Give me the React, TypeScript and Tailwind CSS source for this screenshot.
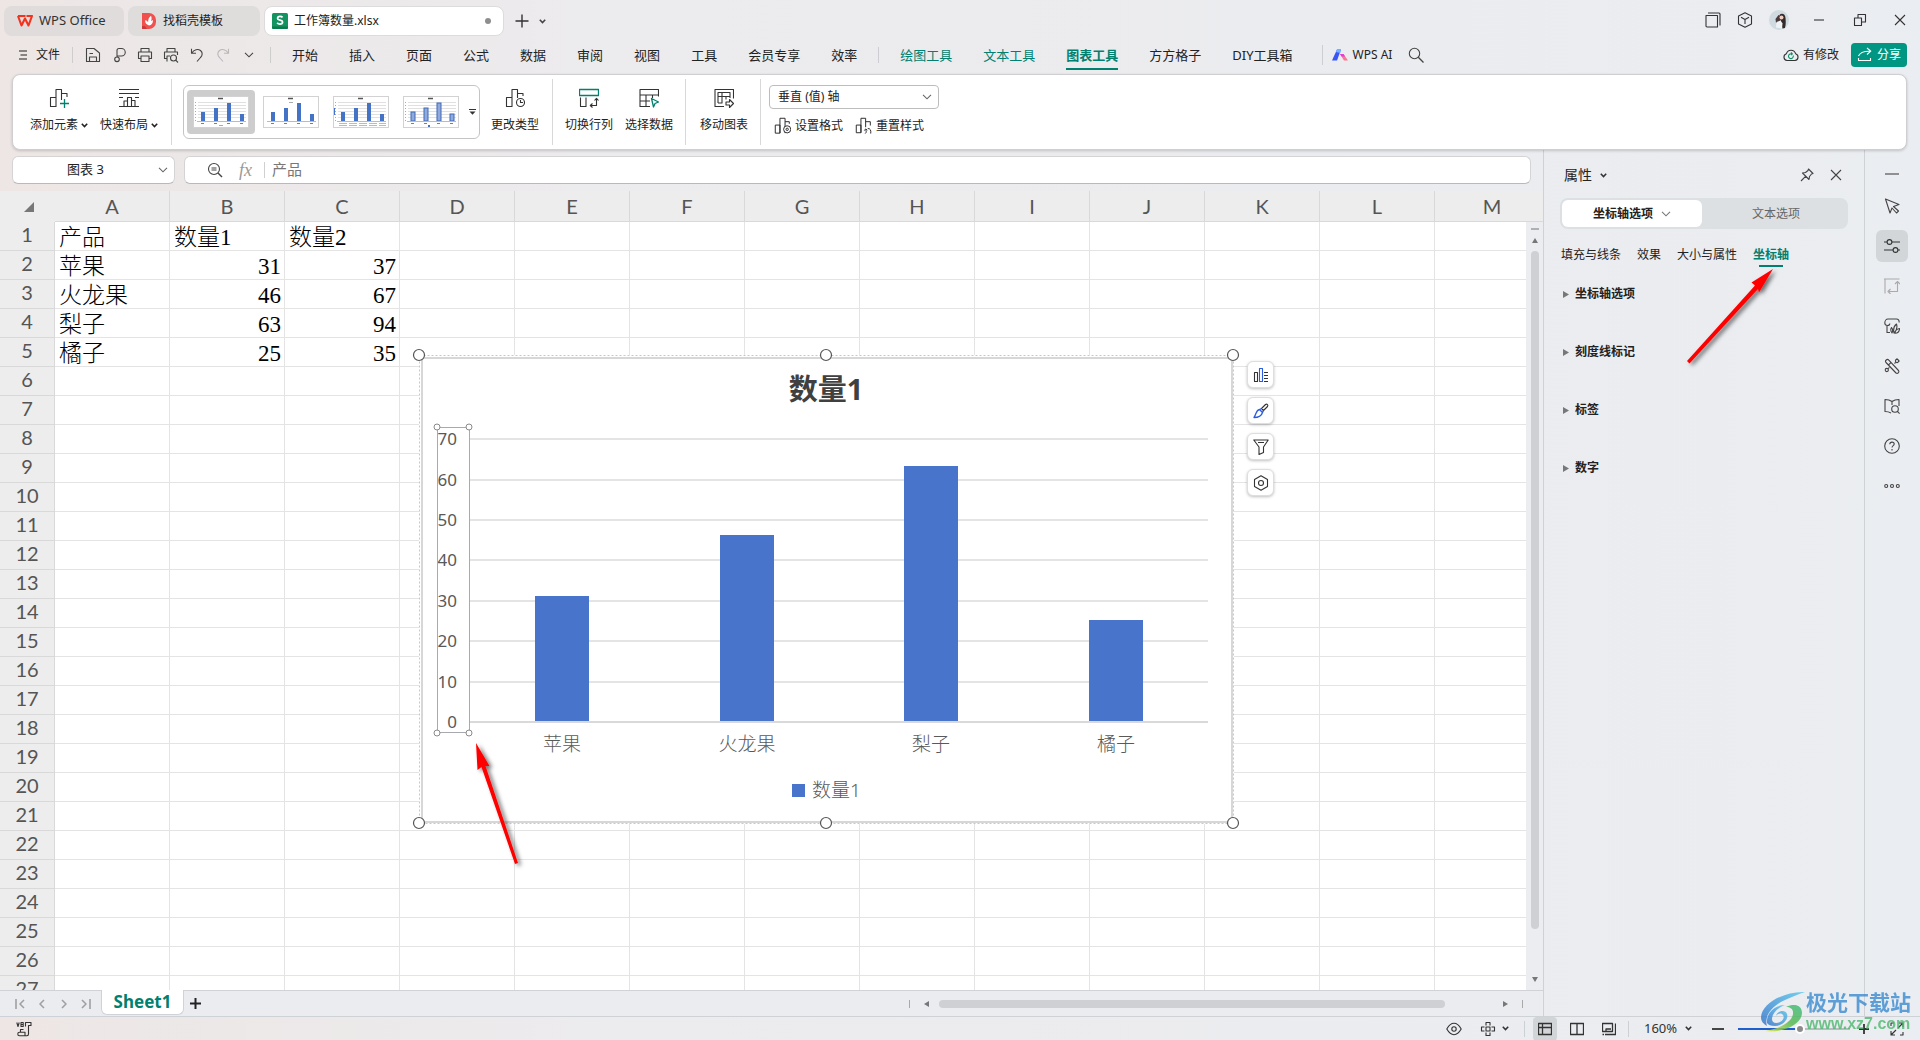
import React from "react";

type Kids = { children: React.ReactNode };
type IconProps = Kids & { size?: number; box?: number; className?: string };

function Icon({ children, size = 16, box = 16, className = "" }: IconProps) {
  return (
    <svg
      width={size}
      height={size}
      viewBox={`0 0 ${box} ${box}`}
      fill="none"
      stroke="currentColor"
      strokeWidth="1.1"
      strokeLinejoin="round"
      className={`shrink-0 ${className}`}
      aria-hidden="true"
    >
      {children}
    </svg>
  );
}

function Chevron({ className = "" }: { className?: string }) {
  return (
    <svg width="10" height="6" viewBox="0 0 10 6" fill="none" stroke="currentColor" strokeWidth="1.1" className={`shrink-0 ${className}`} aria-hidden="true">
      <path d="M1 .8 5 4.8 9 .8" />
    </svg>
  );
}

function SmallChevron({ className = "" }: { className?: string }) {
  return (
    <svg width="7" height="5" viewBox="0 0 7 5" fill="none" stroke="currentColor" strokeWidth="1.6" className={`shrink-0 ${className}`} aria-hidden="true">
      <path d="M.8 .8 3.5 3.5 6.2 .8" />
    </svg>
  );
}

const GREEN = "#00806f";

/* ---------- Title bar ---------- */

function TitleBar() {
  return (
    <div className="flex h-9 items-start gap-1 pl-1 pt-1.5">
      <button className="flex h-[30px] w-[120px] items-center gap-1.5 rounded-lg bg-[#e0dcdc] pl-[13px] text-[13px] text-[#333]">
        <svg width="16" height="12" viewBox="0 0 16 12" aria-hidden="true">
          <path d="M1 1h7.5M1 1l3.5 9.5L8 3.5l3.5 7L15 1H9.5" fill="none" stroke="#f0341f" strokeWidth="2.1" strokeLinejoin="round" />
        </svg>
        WPS Office
      </button>
      <button className="flex h-[30px] w-[132px] items-center gap-[7px] rounded-lg bg-[#dfdcdc] pl-3.5 text-xs text-[#222]">
        <svg width="14" height="16" viewBox="0 0 14 16" aria-hidden="true">
          <path d="M0 0h7a7 7 0 0 1 7 7v2a7 7 0 0 1-7 7H0z" fill="#f0514f" />
          <path d="M0 13h3l2 3H0z" fill="#c93a3a" />
          <path d="M7 12.500C4 11.500 3 9.500 3.200 7.200 4.800 7.600 5.600 8.300 6.200 9.300 5.900 6.500 7 4.500 9 2.800 9.900 5 9.700 6.800 8.900 8.300 9.500 7.600 10.200 7.300 11 7.200 11 10 9.700 12 7 12.500z" fill="#fff" />
        </svg>
        找稻壳模板
      </button>
      <div className="flex h-[30px] w-[240px] items-center rounded-lg border border-[#dcdcdc] bg-white pl-[7px] pr-3 text-xs text-[#222]">
        <svg width="16" height="16" viewBox="0 0 16 16" className="mr-1.5" aria-hidden="true">
          <rect width="16" height="16" rx="1.500" fill="#12935f" />
          <path d="M0 13.500h16V14.500a1.500 1.500 0 0 1-1.500 1.500H1.500A1.500 1.500 0 0 1 0 14.500z" fill="#0b7a4c" />
          <path d="M10.600 4.400C9.900 3.600 9 3.300 8 3.300 6.500 3.300 5.600 4 5.600 5.200c0 2.700 5 1.300 5 3.900 0 1.300-1 2-2.600 2-1.200 0-2.200-.4-2.900-1.200" fill="none" stroke="#fff" strokeWidth="1.700" />
        </svg>
        工作簿数量.xlsx
        <span className="ml-auto size-1.5 rounded-full bg-[#8e8e8e]" />
      </div>
      <button aria-label="新建" className="flex h-[30px] w-7 items-center justify-center text-[#333]">
        <Icon size={14} box={14}><path d="M7 .5v13M.5 7h13" strokeWidth="1.400" /></Icon>
      </button>
      <button aria-label="标签列表" className="-ml-1.5 flex h-[30px] w-4 items-center justify-center text-[#444]"><SmallChevron /></button>

      <div className="ml-auto flex h-7 items-center pr-[14px] text-[#333]">
        <button aria-label="窗口" className="mr-4"><Icon><path d="M1 3.500h11.500V15H2A1 1 0 0 1 1 14zM3 1h11a1 1 0 0 1 1 1v11.500" /></Icon></button>
        <button aria-label="应用" className="mr-4"><Icon><path d="M8 .8 14.500 4v8L8 15.200 1.500 12V4zM4 5.300 8 7.500l4-2.200M8 7.500v4.500" /></Icon></button>
        <button aria-label="账户" className="mr-6">
          <svg width="20" height="20" viewBox="0 0 20 20" aria-hidden="true">
            <circle cx="10" cy="10" r="10" fill="#cfdbe0" />
            <path d="M10.500 5c2-2.500 6-1 6 3 .3 3 .5 6-.5 10l-2.500.500-1.500-7z" fill="#332a2c" />
            <path d="M6.500 9l3-4 2 1 .5 4-3 2.500-2 .5z" fill="#4a3a3c" />
            <circle cx="12.500" cy="7.500" r="2" fill="#f0cdbf" />
            <path d="M7.500 12l4-1.500 2 3-.5 5-6-1z" fill="#eef4f6" />
          </svg>
        </button>
        <button aria-label="最小化" className="mr-7"><Icon size={12} box={12}><path d="M1 6h10" /></Icon></button>
        <button aria-label="还原" className="mr-[27px]"><Icon size={14} box={14}><path d="M1.500 5h7v7.500h-7zM5 5V1.500h7.500V9h-4" /></Icon></button>
        <button aria-label="关闭"><Icon size={12} box={12}><path d="M1 1l10 10M11 1 1 11" /></Icon></button>
      </div>
    </div>
  );
}

/* ---------- Menu bar ---------- */

const MAIN_TABS = ["开始", "插入", "页面", "公式", "数据", "审阅", "视图", "工具", "会员专享", "效率"];

function MenuBar() {
  return (
    <div className="flex h-[38px] items-center pl-[18px] pr-[13px] text-[13px] text-[#222]">
      <button className="flex items-center gap-2 text-xs">
        <Icon size={10} box={10}><path d="M1 1h8M2.500 5H9M1 9h8" /></Icon>
        文件
      </button>
      <span className="ml-3 h-4 w-px bg-[#cfcccc]" />
      <div className="ml-3 flex items-center gap-2.5 text-[#444]">
        <button aria-label="保存"><Icon><path d="M1.500 14.500v-13H9L14.500 6v8.500zM4.500 14v-4h7v4M4.500 6.500H8" /></Icon></button>
        <button aria-label="输出"><Icon><path d="M6 10V3a2 2 0 0 1 2-1.500h2.500a3.700 3.700 0 0 1 0 7.500H6M6 10a2.300 2.300 0 1 1-2.300 2.300c0-1.400 1-2.300 2.300-2.300z" /></Icon></button>
        <button aria-label="打印"><Icon><path d="M4 5V1.500h8V5M4 11.500H1.500v-6.500h13v6.500H12M4 9h8v5.500H4z" /></Icon></button>
        <button aria-label="打印预览"><Icon><path d="M4 5V1.500h8V5M4 11.500H1.500V5h13v3M4 14.500V9h3" /><circle cx="10.500" cy="11" r="3" /><path d="M12.700 13.200 15 15.500" /></Icon></button>
        <button aria-label="撤销"><Icon><path d="M2.500 1.800v4.500H7M2.800 6C5 2.500 9 1.500 11.500 3.500c2.500 2 2 5 0 7L8 14.500" /></Icon></button>
        <button aria-label="恢复" className="text-[#b9b7b7]"><Icon><path d="M13.500 1.800v4.500H9M13.200 6C11 2.500 7 1.500 4.500 3.500c-2.500 2-2 5 0 7L8 14.500" /></Icon></button>
        <button aria-label="更多" className="ml-[3px]"><Chevron /></button>
      </div>
      <span className="ml-4 h-4 w-px bg-[#cfcccc]" />
      <nav className="ml-[21px] flex items-center gap-[31px] whitespace-nowrap pt-0.5">
        {MAIN_TABS.map((t) => <button key={t}>{t}</button>)}
      </nav>
      <span className="ml-[21px] h-4 w-px bg-[#cdcdd2]" />
      <nav className="ml-[21px] flex items-center gap-[31px] whitespace-nowrap pt-0.5">
        <button className="text-[#00806f]">绘图工具</button>
        <button className="text-[#00806f]">文本工具</button>
        <button className="relative font-bold text-[#00806f]">
          图表工具
          <span className="absolute inset-x-0 -bottom-1 h-0.5 bg-[#00806f]" />
        </button>
        <button>方方格子</button>
        <button>DIY工具箱</button>
      </nav>
      <span className="ml-[29px] h-5 w-px bg-[#cdcdd2]" />
      <button className="ml-[9px] flex items-center gap-[5px] whitespace-nowrap text-xs">
        <svg width="16" height="12" viewBox="0 0 16 12" aria-hidden="true">
          <path d="M0 11.500 5 .5h4L5 11.500z" fill="#3a55f5" />
          <path d="M5 .5h4L8.300 4 4 3z" fill="#6fb4ff" />
          <path d="M8 5h3.500L16 11.500h-4z" fill="#f7788f" />
          <path d="M8 5h3.500L13 7.500H9.500z" fill="#e43be0" />
        </svg>
        WPS AI
      </button>
      <button aria-label="搜索" className="ml-4 text-[#444]"><Icon><circle cx="6.500" cy="6.500" r="5.200" /><path d="M10.300 10.300 15.500 15.500" strokeWidth="1.300" /></Icon></button>
      <button className="ml-auto flex items-center gap-1 whitespace-nowrap text-xs">
        <Icon><path d="M4 13.500a3.500 3.500 0 0 1-.6-6.800A4.800 4.800 0 0 1 12.600 6.700 3.500 3.500 0 0 1 12 13.500z" stroke="#333" /><path d="M10.200 8.500A2.400 2.400 0 1 1 8.600 6.900M8 5.400l1.400 1.400L8 8.200" stroke="#0a9068" /></Icon>
        有修改
      </button>
      <button className="ml-3 flex h-6 w-14 items-center justify-center gap-1 rounded bg-[#009682] text-xs text-white">
        <Icon><path d="M1.500 11v2.500h12V11M1.500 9C3 5.500 6 4 13 4.200M10 1l3.800 3.200L10 7.500" /></Icon>
        分享
      </button>
    </div>
  );
}

/* ---------- Ribbon ---------- */

function RibbonButton({ label, icon, arrow }: { label: string; icon: React.ReactNode; arrow?: boolean }) {
  return (
    <button className="flex flex-col items-center gap-[9px] text-xs text-[#222]">
      <span className="flex h-5 items-center text-[#333]">{icon}</span>
      <span className="flex items-center gap-[3px] whitespace-nowrap leading-4">
        {label}
        {arrow && <SmallChevron />}
      </span>
    </button>
  );
}

const Divider = () => <span className="my-1 w-px self-stretch bg-[#d8d8d8]" />;

function Thumb({ kind }: { kind: number }) {
  const bars = [
    [8, 9],
    [21, 13],
    [34, 18],
    [47, 7],
  ];
  return (
    <svg width="56" height="32" viewBox="0 0 56 32" className="bg-white" aria-hidden="true">
      <rect x=".5" y=".5" width="55" height="31" fill="none" stroke="#d2d2d2" />
      <path d="M25 2.500h5" stroke="#555" strokeWidth="1.500" />
      {kind !== 1 && <path d="M5 6.500h48M5 9.500h48M5 12.500h48M5 15.500h48M5 18.500h48M5 21.500h48" stroke="#e0e0e0" />}
      {kind !== 1 && <path d="M2.500 6v20" stroke="#aaa" strokeDasharray="1 2" />}
      {kind === 1 && <path d="M26 6.500h4" stroke="#aaa" />}
      {bars.map(([x, h]) => (
        <rect key={x} x={x} y={25 - h} width="4" height={h} fill={kind === 3 ? "#8faadc" : "#4472c4"} stroke={kind === 3 ? "#3f69b8" : "none"} />
      ))}
      <path d="M4 25.500h49" stroke="#bbb" />
      {kind === 2 ? <path d="M6 27.500h47M6 29.500h47" stroke="#bbb" strokeDasharray="8 2" /> : <path d="M8 27.500h3M21 27.500h3M34 27.500h3M47 27.500h3" stroke="#8a8060" />}
      {kind === 2 && <path d="M1.500 12v7" stroke="#4472c4" />}
      {kind === 0 && <path d="M26 29.500h4" stroke="#aaa" />}
      {kind === 3 && <path d="M25 30h2" stroke="#4472c4" strokeWidth="2" />}
    </svg>
  );
}

const barsPath = "M1.500 9.500H7V19H1.500zM7 19V1.500h6V19";

function Ribbon() {
  return (
    <section className="z-10 ml-3 mr-[13px] flex h-[76px] shrink-0 rounded-lg border border-[#cfcfd2] bg-white shadow-[0_1px_3px_rgba(0,0,0,0.18)]">
      <div className="flex gap-3 pl-[17px] pr-[13px] pt-[13px]">
        <RibbonButton arrow label="添加元素" icon={<Icon size={20} box={20}><path d="M1.500 9.500H7V18.500H1.500zM7 18.500V1.500h5.500V12M12.500 5.500H18V9" /><path d="M15.500 11v9M11 15.500h9" stroke={GREEN} strokeWidth="1.300" /></Icon>} />
        <RibbonButton arrow label="快速布局" icon={<Icon size={20} box={20}><path d="M0 1.500h20M0 5.500h20M0 9.500h4M16 9.500h4M0 18.500h20M5 18V13h3.500M8.500 18V9.500h4V18M12.500 12.500H16V18" /></Icon>} />
      </div>
      <Divider />
      <div className="my-2.5 ml-[11px] flex items-center rounded-md border border-[#c4c4c4] pl-[3px]">
        {[0, 1, 2, 3].map((k) => (
          <button key={k} aria-label={`图表样式 ${k + 1}`} className={k === 0 ? "rounded bg-[#cdcdcd] px-1.5 py-1.5" : "ml-0.5 px-1.5 py-1.5"}>
            <Thumb kind={k} />
          </button>
        ))}
        <button aria-label="更多样式" className="ml-1 w-2.5">
          <svg width="7" height="6" viewBox="0 0 7 6" aria-hidden="true"><path d="M0 .5h7" stroke="#333" /><path d="M.5 2.500h6L3.500 5.800z" fill="#333" /></svg>
        </button>
      </div>
      <div className="flex pl-[11px] pr-[13px] pt-[13px]">
        <RibbonButton label="更改类型" icon={<Icon size={20} box={20}><path d="M1.500 9.500H7V18.500H1.500zM7 18.500V1.500h5.500V10M12.500 5.500H18V8" /><circle cx="15.500" cy="14.500" r="4" /><path d="M15.500 12v2.500H18" /></Icon>} />
      </div>
      <Divider />
      <div className="flex gap-3 px-3 pt-[13px]">
        <RibbonButton label="切换行列" icon={<Icon size={20} box={20}><path d="M.5 1.500h19v6H.5z" stroke={GREEN} strokeWidth="1.300" /><path d="M1.500 9.500v9H7v-9M11.500 17.500h6V11M13.500 15.500l-2.200 2 2.200 2M15.500 12.500l2-2.200 2 2.200" /></Icon>} />
        <RibbonButton label="选择数据" icon={<Icon size={20} box={20}><path d="M11 18.500H1v-17h18.500v7M1 7h18.500M1 13h10M7 7v11.500M13.500 7v3" /><path d="M12.500 10.500l7 3.500-3.500 1.500-1.500 3.500z" stroke={GREEN} strokeWidth="1.300" /></Icon>} />
      </div>
      <Divider />
      <div className="flex pl-3.5 pr-3 pt-[13px]">
        <RibbonButton label="移动图表" icon={<Icon size={20} box={20}><path d="M10 18.500H1v-17h18.500v9M4 15V4.500h12V10M4 8.500h12M8 4.500V15H4M12 8.500v3" /><path d="M12 14h3.500v-2.500L19.500 15.500l-4 4V17H12z" /></Icon>} />
      </div>
      <Divider />
      <div className="ml-2 flex flex-col gap-2 pt-2.5">
        <label className="relative flex items-center">
          <select aria-label="图表元素" defaultValue="v" className="h-6 w-[170px] appearance-none rounded border border-[#bdbdbd] bg-white pl-2 text-xs text-[#222]">
            <option value="v">垂直 (值) 轴</option>
          </select>
          <Chevron className="pointer-events-none absolute right-[7px] text-[#666]" />
        </label>
        <div className="flex items-center gap-3 pl-[5px] text-xs text-[#222]">
          <button className="flex items-center gap-1 whitespace-nowrap">
            <Icon size={17} box={20}><path d={barsPath} /><path d="M13 5.500h5V8" /><circle cx="15.500" cy="14.500" r="4.200" fill="#fff" /><circle cx="15.500" cy="14.500" r="1.400" /></Icon>
            设置格式
          </button>
          <button className="flex items-center gap-1 whitespace-nowrap">
            <Icon size={17} box={20}><path d="M1.500 9.500H7V18.500H1.500zM7 18.500V1.500h5.500V12M12.500 5.500H18V10" /><path d="M12 19.500c1.500-1 1.500-3 .5-4.500M11 16l1.500-2 2 1.500M15 13.500c3 0 4 2 3.500 6" /></Icon>
            重置样式
          </button>
        </div>
      </div>
    </section>
  );
}

/* ---------- Worksheet ---------- */

const COLS = "ABCDEFGHIJKLM".split("");
const DATA: string[][] = [
  ["产品", "数量1", "数量2"],
  ["苹果", "31", "37"],
  ["火龙果", "46", "67"],
  ["梨子", "63", "94"],
  ["橘子", "25", "35"],
];

function FormulaRow() {
  return (
    <div className="flex h-7 shrink-0 gap-[9px] pl-3 pr-3 text-[13px]">
      <div className="flex w-[163px] items-center rounded-md border border-[#d4d4d4] border-b-[#b9b9b9] bg-white pr-1.5 text-[#222]">
        <input aria-label="名称框" defaultValue="图表 3" className="min-w-0 flex-1 bg-transparent text-center outline-none" />
        <Chevron className="text-[#666]" />
      </div>
      <div className="flex flex-1 items-center rounded-md border border-[#d4d4d4] border-b-[#b9b9b9] bg-white pl-[22px]">
        <Icon className="text-[#444]"><circle cx="7" cy="7" r="5.500" /><path d="M11 11l4 4" strokeWidth="1.500" /><path d="M4.500 6h5M4.500 8h5" /></Icon>
        <span className="ml-4 font-[Liberation_Serif] text-lg italic leading-6 text-[#999]">fx</span>
        <span className="ml-3 h-4 w-px bg-[#d0d0d0]" />
        <input aria-label="编辑栏" defaultValue="产品" className="ml-[7px] min-w-0 flex-1 bg-transparent pb-0.5 text-[15px] leading-5 text-[#777] outline-none" />
      </div>
    </div>
  );
}

function Grid() {
  return (
    <table className="w-[1550px] table-fixed border-separate border-spacing-0">
      <colgroup>
        <col className="w-[55px]" />
        {COLS.map((c) => <col key={c} className="w-[115px]" />)}
      </colgroup>
      <thead>
        <tr className="h-[31px] bg-[#ededed] font-[Lato] text-xl leading-[30px] text-[#555]">
          <th className="border-r border-[#ededed] pr-5">
            <svg width="10" height="10" viewBox="0 0 10 10" className="ml-auto" aria-hidden="true"><path d="M10 0v10H0z" fill="#777" /></svg>
          </th>
          {COLS.map((c) => (
            <th key={c} scope="col" className="border-b border-r border-[#d9d9d9] p-0 font-normal">{c}</th>
          ))}
        </tr>
      </thead>
      <tbody>
        {Array.from({ length: 27 }, (_, r) => (
          <tr key={r} className="h-[29px]">
            <th scope="row" className="border-b border-r border-[#d9d9d9] bg-[#ededed] p-0 align-top font-[Lato] text-xl font-normal leading-6 text-[#555]">{r + 1}</th>
            {COLS.map((c, i) => {
              const v = DATA[r]?.[i] ?? "";
              return (
                <td
                  key={c}
                  className={
                    r > 0 && i > 0
                      ? "h-[29px] border-b border-r border-[#e4e4e4] bg-white px-[3px] pb-0 pt-1 text-right font-['Liberation_Serif','Noto_Sans_CJK_SC',serif] text-[23px] font-light leading-6 text-black"
                      : "h-[29px] border-b border-r border-[#e4e4e4] bg-white pb-0 pl-1 pr-0.5 pt-1 font-['Liberation_Serif','Noto_Sans_CJK_SC',serif] text-[23px] font-light leading-6 text-black"
                  }
                >
                  {v}
                </td>
              );
            })}
          </tr>
        ))}
      </tbody>
    </table>
  );
}

const BARS = [
  { name: "苹果", value: 31 },
  { name: "火龙果", value: 46 },
  { name: "梨子", value: 63 },
  { name: "橘子", value: 25 },
];

function ChartObject() {
  const handles = [9, 416, 823].flatMap((x) => [9, 477].map((y) => [x, y]));
  return (
    <svg width="832" height="530" viewBox="0 0 832 530" className="absolute left-[410px] top-[155px]" role="img" aria-label="数量1">
      <defs>
        <filter id="arrowShadow" x="-30%" y="-30%" width="160%" height="160%">
          <feDropShadow dx="3" dy="2" stdDeviation="2" floodOpacity="0.55" />
        </filter>
      </defs>
      <rect x="9" y="9" width="815" height="469" fill="#fff" />
      <rect x="9.500" y="9.500" width="814" height="468" fill="none" stroke="#c8c8c8" strokeDasharray="2 2" />
      <rect x="12" y="12" width="810" height="464" fill="#fff" stroke="#d7d7d7" strokeWidth="2" />
      <text x="416" y="54" textAnchor="middle" fontSize="29" fontWeight="700" fill="#404040" fontFamily="'Noto Sans','Noto Sans CJK SC',sans-serif">数量1</text>
      {[0, 10, 20, 30, 40, 50, 60, 70].map((v) => {
        const y = Math.round(376 - v * 4.04);
        return (
          <g key={v}>
            <path d={`M60 ${y}H798`} stroke={v === 0 ? "#d9d9d9" : "#e4e4e4"} strokeWidth="2" />
            <text x="47" y={y + 6} textAnchor="end" fontSize="17" fill="#595959" fontFamily="'Noto Sans',sans-serif">{v}</text>
          </g>
        );
      })}
      {BARS.map((b, i) => {
        const h = Math.round(b.value * 4.04);
        const cx = 152 + Math.round(i * 184.600);
        return (
          <g key={b.name}>
            <rect x={cx - 27} y={375 - h} width="54" height={h} fill="#4874cb" />
            <text x={cx} y="405" textAnchor="middle" fontSize="19" fontWeight="300" fill="#595959" fontFamily="'Noto Sans CJK SC',sans-serif">{b.name}</text>
          </g>
        );
      })}
      <rect x="382" y="438" width="13" height="13" fill="#4874cb" />
      <text x="402" y="451" fontSize="19" fontWeight="300" fill="#595959" fontFamily="'Noto Sans','Noto Sans CJK SC',sans-serif">数量1</text>
      <rect x="27.500" y="81.500" width="32" height="305" fill="none" stroke="#a9a9b0" />
      {[[27, 81], [59, 81], [27, 387], [59, 387]].map(([x, y]) => <circle key={`${x}-${y}`} cx={x} cy={y} r="3" fill="#fff" stroke="#8a8a8a" />)}
      {handles.map(([x, y]) => <circle key={`${x}-${y}`} cx={x} cy={y} r="5.500" fill="#fff" stroke="#555" strokeWidth="1.200" />)}
      <path d="M66 397 79.500 420 75.500 420 108 517 105 518 71.500 421 67.500 424z" fill="#fe0000" filter="url(#arrowShadow)" />
    </svg>
  );
}

function ChartTools() {
  const cls = "flex size-[27px] items-center justify-center rounded-md border border-[#dedede] bg-white text-[#333] shadow-[0_1px_3px_rgba(0,0,0,0.25)]";
  return (
    <div className="absolute left-[1247px] top-[170px] flex flex-col gap-[9px]">
      <button aria-label="图表元素" className={cls}><Icon><path d="M1.500 5.500h3v9h-3z" /><path d="M6.500 1.500h3v13h-3z" stroke="#2a5be0" /><path d="M11 5.500h4M11 8.500h4M11 11.500h4M11 14.500h4" /></Icon></button>
      <button aria-label="图表样式" className={cls}><Icon><path d="M8.500 5.500 12.500 1.500c1.500-1 3 .5 2 2L10.500 7.500z" /><path d="M8.500 5.500l-2 1 3 3 1-2M6.500 6.500C3 7 3.500 11 1 14.500 5 14.500 8.500 13 9.500 9.500" stroke="#2a5be0" strokeWidth="1.300" /></Icon></button>
      <button aria-label="筛选" className={cls}><Icon><path d="M.8 1h14.400L10.500 8v5.500L6 15.500V8zM5 3.500h6" /></Icon></button>
      <button aria-label="设置" className={cls}><Icon><path d="M8 .8 14.500 4.500v7L8 15.200 1.500 11.500v-7z" /><circle cx="8" cy="8" r="2.500" /></Icon></button>
    </div>
  );
}

function VerticalScroll() {
  return (
    <div className="mt-[30px] flex w-[17px] shrink-0 flex-col items-center border-t border-[#d9d9d9] bg-[#ecedf1] pb-2 pl-px pt-1.5">
      <span className="h-0.5 w-2 bg-[#b0b0b2]" />
      <svg width="6" height="5" viewBox="0 0 6 5" className="mt-2" aria-hidden="true"><path d="M3 0 6 5H0z" fill="#777" /></svg>
      <span className="mb-12 mt-2 w-2 flex-1 rounded bg-[#cfd0d4]" />
      <svg width="6" height="5" viewBox="0 0 6 5" aria-hidden="true"><path d="M3 5 6 0H0z" fill="#777" /></svg>
    </div>
  );
}

function SheetBar() {
  return (
    <div className="flex h-[26px] shrink-0 items-center border-t border-[#d0d2d6] bg-[#ebecf0] pr-5">
      <div className="flex w-[101px] items-center gap-3 pl-[15px] text-[#a0a0a2]">
        <button aria-label="第一张"><Icon size={10} box={10}><path d="M1 0v10M9 1 5 5l4 4" strokeWidth="1.600" /></Icon></button>
        <button aria-label="上一张"><Icon size={10} box={10}><path d="M7 1 3 5l4 4" strokeWidth="1.600" /></Icon></button>
        <button aria-label="下一张"><Icon size={10} box={10}><path d="M3 1l4 4-4 4" strokeWidth="1.600" /></Icon></button>
        <button aria-label="最后一张"><Icon size={10} box={10}><path d="M9 0v10M1 1l4 4-4 4" strokeWidth="1.600" /></Icon></button>
      </div>
      <button className="-mt-px h-[25px] w-[83px] self-start rounded-b-md border border-t-0 border-[#d0d2d6] bg-white font-['Noto_Sans'] text-[17px] font-bold leading-6 text-[#00806f]">Sheet1</button>
      <button aria-label="新建工作表" className="ml-1.5 text-[#222]"><Icon size={11} box={11}><path d="M5.500 0v11M0 5.500h11" strokeWidth="2" /></Icon></button>
      <div className="ml-auto flex w-[614px] items-center">
        <span className="h-2 w-px bg-[#aaa]" />
        <svg width="5" height="6" viewBox="0 0 5 6" className="ml-3.5" aria-hidden="true"><path d="M0 3 5 0v6z" fill="#777" /></svg>
        <span className="ml-2.5 mr-[58px] h-2 flex-1 rounded bg-[#cfd0d3]" />
        <svg width="5" height="6" viewBox="0 0 5 6" aria-hidden="true"><path d="M5 3 0 0v6z" fill="#777" /></svg>
        <span className="ml-3.5 h-2 w-px bg-[#aaa]" />
      </div>
    </div>
  );
}

/* ---------- Properties panel ---------- */

function PropertiesPanel() {
  return (
    <aside className="relative flex w-[321px] shrink-0 flex-col border-l border-[#ced1d5] pl-4 pr-4 text-xs text-[#222]">
      <div className="mt-3.5 flex h-[22px] items-center pl-1">
        <button className="flex items-center gap-2 text-sm">属性<SmallChevron className="text-[#333]" /></button>
        <button aria-label="固定" className="ml-auto mr-4 text-[#444]"><Icon size={14} box={14}><path d="M8.500 1 13 5.500 11.500 6 9.500 8.500 9 11.500 2.500 5l3-.5L8 2.500zM5.800 8.200 1 13" /></Icon></button>
        <button aria-label="关闭面板" className="mr-1.5 text-[#444]"><Icon size={12} box={12}><path d="M1 1l10 10M11 1 1 11" /></Icon></button>
      </div>
      <div className="mt-3 flex h-[31px] rounded-lg bg-[#dce0e2] p-0.5">
        <button className="flex w-[140px] items-center justify-center gap-2 rounded-md bg-white font-bold">坐标轴选项<Chevron className="text-[#777]" /></button>
        <button className="flex-1 pl-1 text-[#666]">文本选项</button>
      </div>
      <div className="mt-4 flex h-5 items-center gap-4 whitespace-nowrap pl-px">
        <button>填充与线条</button>
        <button>效果</button>
        <button>大小与属性</button>
        <button className="relative font-bold text-[#00806f]">坐标轴<span className="absolute inset-x-1.5 -bottom-1 h-0.5 bg-[#00806f]" /></button>
      </div>
      <div className="mt-[19px] flex flex-col items-start gap-[38px] font-bold">
        {["坐标轴选项", "刻度线标记", "标签", "数字"].map((s) => (
          <button key={s} className="flex h-5 items-center gap-1.5 pl-[3px]">
            <svg width="6" height="7" viewBox="0 0 6 7" aria-hidden="true"><path d="M0 0l6 3.500L0 7z" fill="#777" /></svg>
            {s}
          </button>
        ))}
      </div>
      <svg width="100" height="110" viewBox="0 0 100 110" className="absolute left-[137px] top-[113px]" aria-hidden="true">
        <path d="M92 6 70.500 19.500 74 22.500 6 98 8.500 100.500 77 26 78 29.500z" fill="#fe0000" filter="url(#arrowShadow)" />
      </svg>
    </aside>
  );
}

function Rail() {
  const b = "flex size-8 items-center justify-center rounded-md text-[#444]";
  return (
    <div className="flex w-14 shrink-0 flex-col items-center gap-2 border-l border-[#ced1d5] pr-px pt-2">
      <button aria-label="收起" className="-mb-2 flex size-8 items-center justify-center text-[#8e9092]"><Icon><path d="M1 8h14" strokeWidth="2" /></Icon></button>
      <button aria-label="选择" className={b}><Icon><path d="M1.500 1 15 6.500 9.500 8.500l5 4.500-2 2-4.500-5L6 15z" /></Icon></button>
      <button aria-label="属性" className="flex size-8 items-center justify-center rounded-md bg-[#d2d6d8] text-[#333]"><Icon><path d="M0 4h3M8 4h8M0 12h9M14 12h2" /><circle cx="5.500" cy="4" r="2.400" /><circle cx="11.500" cy="12" r="2.400" /></Icon></button>
      <button aria-label="转换" className="flex size-8 items-center justify-center rounded-md text-[#aaa]"><Icon><path d="M1 .5v15M0 1h15.500M5 13.500h8.500V4M6.500 11 4 13.500 6.500 16M11 6l2.500-2.500L16 6" /></Icon></button>
      <button aria-label="素材" className={b}><Icon><path d="M3 7.500V14.500h3M3.500 7.500C1.500 7.500.8 6.500.8 5 .8 3 2 1 4 1h8.500c1.500 0 2.700 1.500 2.700 3.500M3.500 7.500C5 7.500 5.800 6.500 5.800 5.500" /><path d="M8 15c-1.500-2-1.500-4-.5-5.500 1.300 1.500 1.500 3.500.5 5.500zM10 15c-1-4 0-7 2.500-9 1 3 .5 6-2.500 9zM11 15.200c0-2.500 2-4.200 4.500-4.700 0 2.700-1.500 4.700-4.500 4.700z" /></Icon></button>
      <button aria-label="工具" className={b}><Icon><path d="M2 4.500a1.800 1.800 0 0 1 2.800-2.300L14.500 12.500a1.800 1.800 0 0 1-2.500 2.500zM4.500 6.800 7 4.500" /><circle cx="13" cy="3" r="1.600" /><circle cx="2.800" cy="12" r="1.600" /><path d="M10.500 5.500l1.200-1.200M4.200 10.600l1.200-1.200M13 .2v1.200M15.800 3h-1.200" /></Icon></button>
      <button aria-label="查找" className={b}><Icon><path d="M8 3.500C6 2 3.500 1.500 1 1.500v12c2.500 0 4 .3 6 1.500M8 3.500c2-1.500 4.500-2 7-2V8M8 3.500V7" /><circle cx="11" cy="11" r="3.300" /><path d="M13.400 13.400l2.200 2.200" /></Icon></button>
      <button aria-label="帮助" className={b}><Icon><circle cx="8" cy="8" r="7.300" /><path d="M5.800 6.300c0-3 4.400-2.800 4.400-.2C10.200 7.600 8 7.800 8 9.600M8 11v1.500" /></Icon></button>
      <button aria-label="更多" className={b}><Icon><circle cx="2.200" cy="8" r="1.500" /><circle cx="8" cy="8" r="1.500" /><circle cx="13.800" cy="8" r="1.500" /></Icon></button>
    </div>
  );
}

/* ---------- Status bar ---------- */

function StatusBar() {
  return (
    <footer className="relative flex h-6 shrink-0 items-center border-t border-[#ced1d5] pl-4 pr-4 text-[#333]">
      <button aria-label="宏"><Icon><path d="M.8 1.500 2 5.500 3.200 1.500M5 1.500v4h2.200v-4zM5 3.500h2.200M9.500 5.500v-4h5.500v3h-2.500V13c0 1.200-.5 1.700-1.500 1.700H3.500c-2.300 0-2.300-3.500 0-3.500H9v3M4.500 11V8.500h3" /></Icon></button>
      <button aria-label="护眼" className="ml-auto"><Icon><path d="M.8 8C3 4.200 5.300 2.300 8 2.300S13 4.200 15.200 8C13 11.800 10.700 13.700 8 13.700S3 11.800.8 8z" /><circle cx="8" cy="8" r="2.200" /></Icon></button>
      <button aria-label="聚焦" className="ml-[18px] flex items-center gap-1.5"><Icon><path d="M6 4.500V1.500h4v3M6 11.500v3h4v-3M4.500 6h-3v4h3M11.500 6h3v4h-3M6 6h4v4H6z" /></Icon><SmallChevron /></button>
      <span className="ml-[15px] h-4 w-px bg-[#cdd0d3]" />
      <button aria-label="普通视图" className="ml-2 flex h-6 w-6 items-center justify-center rounded bg-[#d2d5d8]"><Icon size={14} box={14}><path d="M.5 1.500h13v11H.5zM.5 5.500h13M4.500 1.500v11" strokeWidth="1.300" /></Icon></button>
      <button aria-label="分页预览" className="ml-[13px]"><Icon size={14} box={14}><path d="M.5 1.500h13v11H.5zM7 1.500v11" strokeWidth="1.300" /></Icon></button>
      <button aria-label="阅读视图" className="ml-[18px]"><Icon size={14} box={14}><path d="M.5 1.500h10v8H.5zM3 12.500h10.500V1.500M.5 12.500h1.500M4 9V7h5" strokeWidth="1.300" /></Icon></button>
      <span className="ml-3 h-4 w-px bg-[#cdd0d3]" />
      <button className="ml-[15px] flex w-12 items-center justify-between text-[13px]">160%<SmallChevron /></button>
      <button aria-label="缩小" className="ml-5"><Icon size={12} box={12}><path d="M0 6h12" strokeWidth="1.800" /></Icon></button>
      <input
        type="range"
        aria-label="缩放"
        min={0}
        max={100}
        defaultValue={56}
        className="ml-3.5 h-3 w-28 appearance-none bg-transparent [&::-webkit-slider-runnable-track]:h-0.5 [&::-webkit-slider-runnable-track]:bg-linear-to-r [&::-webkit-slider-runnable-track]:from-[#1e5fd0] [&::-webkit-slider-runnable-track]:from-56% [&::-webkit-slider-runnable-track]:to-[#b9bcc0] [&::-webkit-slider-runnable-track]:to-56% [&::-webkit-slider-thumb]:-mt-1 [&::-webkit-slider-thumb]:size-2.5 [&::-webkit-slider-thumb]:appearance-none [&::-webkit-slider-thumb]:rounded-full [&::-webkit-slider-thumb]:border-2 [&::-webkit-slider-thumb]:border-white [&::-webkit-slider-thumb]:bg-[#8b8b8b]"
      />
      <button aria-label="放大" className="ml-2"><Icon size={12} box={12}><path d="M6 1v10M1 6h10" strokeWidth="1.800" /></Icon></button>
      <button aria-label="全屏" className="ml-5"><Icon size={14} box={14}><path d="M8 6l5-5M9 1h4v4M6 8l-5 5M1 9v4h4M1 4V1h3M13 10v3h-3" /></Icon></button>

      <div className="pointer-events-none absolute bottom-[7px] right-[9px] flex items-end opacity-80">
        <svg width="46" height="42" viewBox="0 0 46 42" aria-hidden="true">
          <defs>
            <linearGradient id="wmBlue" x1="0" y1="1" x2="1" y2="0"><stop offset="0" stopColor="#2f6fc8" /><stop offset="1" stopColor="#54c8ee" /></linearGradient>
            <linearGradient id="wmGreen" x1="0" y1="1" x2="1" y2="0"><stop offset="0" stopColor="#e6e43a" /><stop offset=".5" stopColor="#4fb848" /><stop offset="1" stopColor="#38b87a" /></linearGradient>
          </defs>
          <path d="M45 1C25 0 2 12 1 26c0 5 3 7 6 9-3-9 4-20 18-26C32 6 38 3 45 1z" fill="url(#wmBlue)" />
          <path d="M7 32C6 22 15 14 25 14c-8 3-13 9-13 14 0 4 4 5 8 3 4-2 5-6 2-8-2-1-5 0-6 2 1-5 9-7 11-2 2 6-5 12-12 12-4 0-7-1-8-3z" fill="url(#wmBlue)" />
          <path d="M26 16c8-4 16-2 16 6 0 9-14 20-37 18C20 38 34 30 33 21c0-3-3-5-7-5z" fill="url(#wmGreen)" />
        </svg>
        <div className="flex flex-col whitespace-nowrap font-bold">
          <span className="text-[21px] leading-6 text-[#3b8bd0]">极光下载站</span>
          <span className="font-['Liberation_Sans'] text-base leading-[19px] text-[#4fb870]">www.xz7.com</span>
        </div>
      </div>
    </footer>
  );
}

export default function App() {
  return (
    <div className="flex h-screen w-full flex-col overflow-hidden bg-linear-to-r from-[#ede6e5] via-[#ecebed] via-30% to-[#eaedf1] font-['Noto_Sans','Noto_Sans_CJK_SC',sans-serif]">
      <TitleBar />
      <MenuBar />
      <Ribbon />
      <main className="flex min-h-0 flex-1">
        <div className="flex min-w-0 flex-1 flex-col pt-1.5">
          <FormulaRow />
          <div className="mt-[7px] flex min-h-0 flex-1 bg-[#ededed]">
            <div className="relative min-w-0 flex-1 overflow-hidden">
              <Grid />
              <ChartObject />
              <ChartTools />
            </div>
            <VerticalScroll />
          </div>
          <SheetBar />
        </div>
        <PropertiesPanel />
        <Rail />
      </main>
      <StatusBar />
    </div>
  );
}
